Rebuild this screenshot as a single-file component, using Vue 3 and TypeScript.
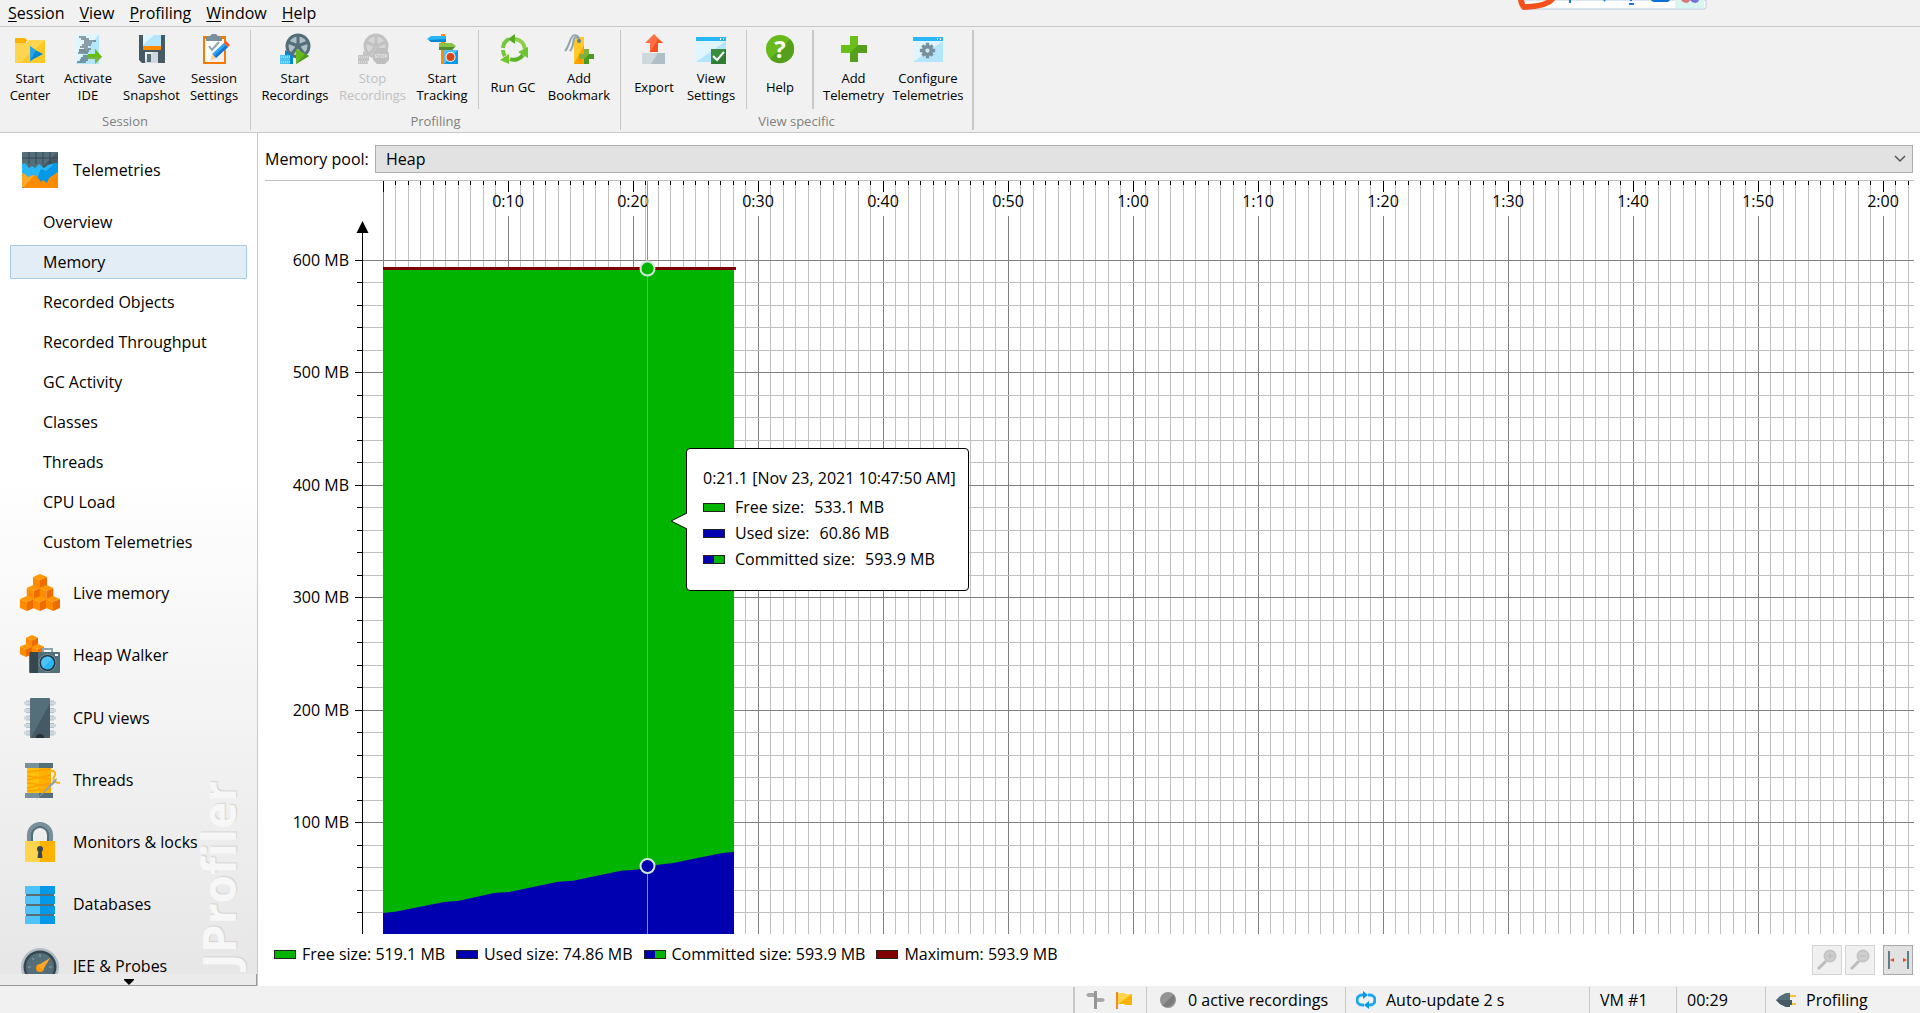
<script setup lang="ts">
import { computed, onBeforeUnmount, onMounted, ref } from 'vue'

interface Tool { icon: string; label: string; width: number; disabled?: boolean }
interface ToolGroup { title: string; blocks: Tool[][] }
interface Series { kind: string; label: string; value: string }

const menus = ['Session', 'View', 'Profiling', 'Window', 'Help']

const groups: ToolGroup[] = [
  {
    title: 'Session',
    blocks: [[
      { icon: 'folder', label: 'Start\nCenter', width: 54 },
      { icon: 'ide', label: 'Activate\nIDE', width: 62 },
      { icon: 'save', label: 'Save\nSnapshot', width: 65 },
      { icon: 'clipboard', label: 'Session\nSettings', width: 60 },
    ]],
  },
  {
    title: 'Profiling',
    blocks: [
      [
        { icon: 'record', label: 'Start\nRecordings', width: 76 },
        { icon: 'stop', label: 'Stop\nRecordings', width: 79, disabled: true },
        { icon: 'track', label: 'Start\nTracking', width: 60 },
      ],
      [
        { icon: 'gc', label: 'Run GC', width: 56 },
        { icon: 'bookmark', label: 'Add\nBookmark', width: 76 },
      ],
    ],
  },
  {
    title: 'View specific',
    blocks: [
      [
        { icon: 'export', label: 'Export', width: 58 },
        { icon: 'viewset', label: 'View\nSettings', width: 56 },
      ],
      [{ icon: 'help', label: 'Help', width: 56 }],
      [
        { icon: 'plus', label: 'Add\nTelemetry', width: 65 },
        { icon: 'config', label: 'Configure\nTelemetries', width: 84 },
      ],
    ],
  },
]

const views = ['Overview', 'Memory', 'Recorded Objects', 'Recorded Throughput', 'GC Activity', 'Classes', 'Threads', 'CPU Load', 'Custom Telemetries']
const activeView = ref('Memory')

const sections = [
  { icon: 'cubes', label: 'Live memory' },
  { icon: 'heap', label: 'Heap Walker' },
  { icon: 'cpu', label: 'CPU views' },
  { icon: 'spool', label: 'Threads' },
  { icon: 'lock', label: 'Monitors & locks' },
  { icon: 'db', label: 'Databases' },
  { icon: 'gauge', label: 'JEE & Probes' },
]

const hover: Series[] = [
  { kind: 'free', label: 'Free size:', value: '533.1 MB' },
  { kind: 'used', label: 'Used size:', value: '60.86 MB' },
  { kind: 'committed', label: 'Committed size:', value: '593.9 MB' },
]
const legend: Series[] = [
  { kind: 'free', label: 'Free size:', value: '519.1 MB' },
  { kind: 'used', label: 'Used size:', value: '74.86 MB' },
  { kind: 'committed', label: 'Committed size:', value: '593.9 MB' },
  { kind: 'maximum', label: 'Maximum:', value: '593.9 MB' },
]

/* chart geometry */
const originX = 118
const axisX = 97
const secondWidth = 12.5
const cursorTime = 21.1
const endTime = 28.1
const committed = 593.9
const used: [number, number][] = [
  [0, 19.6], [1, 20.6], [4.9, 29.4], [6.1, 30.5], [8.9, 37.4], [10.1, 38.3], [14, 47.3],
  [15.2, 48.3], [19.1, 57.2], [20.4, 58.3], [21.7, 62], [23.2, 64.1], [27.1, 72.8], [28.1, 74],
]

const plot = ref<HTMLElement | null>(null)
const size = ref({ w: 1649, h: 754 })
let observer: ResizeObserver | undefined

onMounted(() => {
  observer = new ResizeObserver(([entry]) => {
    size.value = { w: Math.round(entry.contentRect.width), h: Math.round(entry.contentRect.height) }
  })
  if (plot.value) observer.observe(plot.value)
})
onBeforeUnmount(() => observer?.disconnect())

const bottom = computed(() => size.value.h - 1)
const xAt = (s: number) => Math.floor(originX + s * secondWidth)
const exactY = (mb: number) => size.value.h - (mb * (size.value.h - 79.5)) / 600
const yAt = (mb: number) => Math.floor(exactY(mb))

const seconds = computed(() => {
  const count = Math.floor((size.value.w - originX) / secondWidth)
  return Array.from({ length: count + 1 }, (_, s) => ({
    x: xAt(s),
    major: s % 10 === 0,
    text: s > 0 && s % 10 === 0 ? `${Math.floor(s / 60)}:${String(s % 60).padStart(2, '0')}` : '',
  }))
})
const levels = computed(() =>
  Array.from({ length: 30 }, (_, i) => (i + 1) * 20).map((mb) => ({
    y: yAt(mb),
    major: mb % 100 === 0,
    text: mb % 100 === 0 ? `${mb} MB` : '',
  })),
)
const usedPath = computed(() => {
  const pts = used.map(([s, mb]) => `${xAt(s)},${exactY(mb).toFixed(1)}`).join(' L')
  return `M${originX},${bottom.value} L${pts} V${bottom.value} Z`
})
</script>

<template>
  <div class="app">
    <svg class="defs" aria-hidden="true">
      <symbol id="i-folder" viewBox="0 0 32 32">
        <path fill="#ffb300" d="M1 5h10l3 3h-2v3H1z" /><path fill="#ffd54f" d="M1 10h11l3-3h16v23H1z" />
        <path fill="#ffca28" d="M31 7v23H6z" /><path fill="#29b6f6" d="M16 13l7 8-7 8z" /><path fill="#0288d1" d="M16 28l13-7-8-4z" /><path fill="#29a8e8" d="M16 13l6 4-6 11z" />
      </symbol>
      <symbol id="i-ide" viewBox="0 0 32 32">
        <path fill="#e1f5fe" d="M4 1h23v30H4z" /><path fill="#b3e5fc" d="M27 1v30H4z" />
        <path stroke="#37474f" stroke-width="1.2" fill="none" d="M7 4h7M9 6h8M12 8h12M12 10h8M10 12h9M8 14h8M12 16h7M7 18h10M6 20h10M11 23h7M9 25h7M8 27h8M5 29h9" /><path fill="#78909c" d="M7 16h7v4H7z" />
        <path fill="#7cb342" d="M16 21h7v-5l7 8-7 7v-5h-7z" /><path fill="#64c010" d="M16 21h7v-5l7 8H16z" />
      </symbol>
      <symbol id="i-save" viewBox="0 0 32 32">
        <path fill="#455a64" d="M3 2h26v28H6l-3-3z" /><path fill="#b3e5fc" d="M7 2h18v11H7z" /><path fill="#e1f5fe" d="M7 2h11L7 12z" />
        <path fill="#fb8c00" d="M7 13h18v4H7z" /><path fill="#cfd8dc" d="M9 19h13v11H9z" /><path fill="#eceff1" d="M9 19h8l-8 9z" /><path fill="#546e7a" d="M11 21h4v8h-4z" />
      </symbol>
      <symbol id="i-clipboard" viewBox="0 0 32 32">
        <path fill="#f57c00" d="M5 3h23v28H5z" /><path fill="#fff" d="M7 6h19v23H7z" /><path fill="#f0f0f0" d="M26 9v20H9z" />
        <path fill="#78909c" d="M8 8V4l4-1 2-2h4l2 2 4 1v4z" /><path fill="none" stroke="#90a4ae" stroke-width="2" d="M11 13l3 4 7-8" />
        <path fill="#29a8f0" d="M26 10l4 4-12 11-4-4z" /><path fill="#1976d2" d="M28 12l2 2-12 11-2-2z" /><path fill="#ff5722" d="M26 10l2-2 4 4-2 2z" /><path fill="#ffcc80" d="M14 21l4 4-5 2z" />
      </symbol>
      <symbol id="i-reel" viewBox="0 0 32 32">
        <circle cx="19" cy="13" r="11" fill="none" stroke="currentColor" stroke-width="3" /><circle cx="19" cy="13" r="3" fill="currentColor" />
        <path stroke="currentColor" stroke-width="3" d="M19 13V2M19 13l10-4M19 13l7 9M19 13l-7 9M19 13L9 9" />
      </symbol>
      <symbol id="i-record" viewBox="0 0 32 32">
        <circle cx="19" cy="13" r="11" fill="#b0bec5" /><use href="#i-reel" color="#546e7a" />
        <path fill="#0277bd" d="M6 17l5 4-5 4z" /><path fill="#4fc3f7" d="M1 22h10v9H1z" /><path fill="#0288d1" d="M6 18l8 5v8h-3v-9H6z" />
        <path stroke="#e1f5fe" stroke-dasharray="1 1" d="M2 24h9M2 29h9" /><path fill="#66bb1a" d="M17 16l13 7-13 8z" /><path fill="#4c9a1f" d="M17 31l13-8-4-2z" />
      </symbol>
      <symbol id="i-stop" viewBox="0 0 32 32">
        <circle cx="19" cy="13" r="11" fill="#d6d6d6" /><use href="#i-reel" color="#c2c2c2" />
        <path fill="#c4c4c4" d="M1 22h10v9H1zM6 18l6 4v6H6z" /><path stroke="#eee" stroke-dasharray="1 1" d="M2 24h9M2 29h9" />
        <path fill="#bfbfbf" d="M20 15h8l4 5v7l-4 4h-8l-4-4v-7z" />
      </symbol>
      <symbol id="i-track" viewBox="0 0 32 32">
        <path fill="#fb8c00" d="M15 1h4v30h-4z" /><path fill="#29b6f6" d="M1 6l4-3h15v6H5z" /><path fill="#0288d1" d="M3 7l17-1v3H5z" />
        <path fill="#8bc34a" d="M13 10h13l4 3-4 4H13z" /><path fill="#558b2f" d="M13 14h16l-3 3H13z" />
        <path fill="#4fc3f7" d="M18 17h14v14H18z" /><path fill="#039be5" d="M32 17v14H18z" /><circle cx="24.500" cy="24" r="5" fill="#fff" /><circle cx="24.500" cy="24" r="4" fill="#d84315" />
      </symbol>
      <symbol id="i-gc" viewBox="0 0 32 32">
        <g fill="none" stroke-width="4"><path d="M6 15a11 11 0 0 1 6-9" stroke="#76c63a" /><path d="M18 6a11 11 0 0 1 10 10" stroke="#8bd048" /><path d="M26 22a11 11 0 0 1-13 4" stroke="#5db526" /><path d="M8 23a11 11 0 0 1-2-6" stroke="#76c63a" /></g>
        <path fill="#55aa20" d="M11 6l7-5v10z" /><path fill="#6fc52c" d="M21 19l10-5v11zM3 27l9-6v10z" />
      </symbol>
      <symbol id="i-bookmark" viewBox="0 0 32 32">
        <path fill="#ffca28" d="M11 7l4-3h6v27H11z" /><path fill="#ffa000" d="M21 12v19H11z" />
        <path fill="none" stroke="#90a4ae" stroke-width="2" d="M16 7c0-5-5-6-7-3C6 8 6 14 2 18M16 7c0-3-4-4-5-1-1 4-1 9-4 12" /><circle cx="16" cy="8" r="2" fill="#607d8b" />
        <path fill="#7cb342" d="M21 16h5v5h5v5h-5v5h-5v-5h-5v-5h5z" /><path fill="#4c9a1f" d="M26 21h5v5h-5v5h-5v-5z" />
      </symbol>
      <symbol id="i-export" viewBox="0 0 32 32">
        <path fill="#ff7043" d="M16 1l9 9h-5v9h-8v-9H7z" /><path fill="#f4511e" d="M25 10h-5v9h-8l8-13z" /><path fill="#cfd8dc" d="M4 20h23v11H4z" /><path fill="#b0bec5" d="M27 20v11H13l7-11z" />
      </symbol>
      <symbol id="i-window" viewBox="0 0 32 32">
        <path fill="#e1f5fe" d="M1 4h30v25H1z" /><path fill="#b3e5fc" d="M31 8v21H1z" /><path fill="#29b6f6" d="M1 4h30v4H1z" /><path fill="#fff" d="M25 5h1v2h-1zM28 5h1v2h-1z" />
      </symbol>
      <symbol id="i-viewset" viewBox="0 0 32 32">
        <use href="#i-window" /><path fill="#388e3c" d="M16 16h15v15H16z" /><path fill="#2e7d32" d="M31 16v15H16z" /><path fill="none" stroke="#fff" stroke-width="2" d="M18 23l4 4 7-8" />
      </symbol>
      <symbol id="i-help" viewBox="0 0 32 32">
        <circle cx="16" cy="16" r="14" fill="#66bb1a" /><path fill="#559f1c" d="M26 6A14 14 0 0 1 6 26z" />
      </symbol>
      <symbol id="i-plus" viewBox="0 0 32 32">
        <path fill="#6abf1b" d="M12 3h8v9h9v8h-9v9h-8v-9H3v-8h9z" /><path fill="#559f1c" d="M20 12h9v8h-9v9h-8v-9z" />
      </symbol>
      <symbol id="i-gear" viewBox="0 0 20 20">
        <g stroke="currentColor" stroke-width="4"><path d="M10 1v18M1 10h18M4 4l12 12M16 4L4 16" /></g><circle cx="10" cy="10" r="6.500" fill="currentColor" /><circle cx="10" cy="10" r="2.500" fill="#cfe8f5" />
      </symbol>
      <symbol id="i-config" viewBox="0 0 32 32">
        <use href="#i-window" /><use href="#i-gear" x="7" y="9" width="17" height="17" color="#78909c" />
      </symbol>
      <symbol id="i-telemetry" viewBox="0 0 40 40">
        <rect x="2" y="2" width="36" height="36" rx="1" fill="#546e7a" /><path fill="#455a64" d="M38 2v20L18 20z" />
        <path stroke="#37474f" d="M9 2v12M16 2v12M23 2v12M30 2v12M2 8h36" />
        <path fill="#29b6f6" d="M2 14l3-1 4 5 3-2 3 2 4-4 5 4 4-3 4-1 3-1 3 2v13l-4 1-4 7-4-3-3 3-4-4-2-3-5 1-3-3-3 1-4-3z" /><path fill="#0398e8" d="M21 19l5 2 5-4 3-4h4v14l-4 2-5 8-6 1-7-7z" />
        <path fill="#ffa726" d="M2 23l3 1 3 3 5-2 3 1 5 8 3-2 4 2 3-7 7-5v15H2z" /><path fill="#fb8c00" d="M14 26l2-1 5 7 2-2 4 3 2-5 9-6v15a1 1 0 0 1-1 1H3z" />
      </symbol>
      <symbol id="i-cube" viewBox="0 0 14 15">
        <path fill="#ff9800" d="M0 3l7-3 7 3-7 3z" /><path fill="#ff8c00" d="M0 3l7 3v9l-7-3z" /><path fill="#ef6c00" d="M14 3L7 6v9l7-3z" />
      </symbol>
      <symbol id="i-cubes" viewBox="0 0 40 40">
        <use href="#i-cube" x="13" y="1" width="14" height="15" /><use href="#i-cube" x="6.500" y="12" width="14" height="15" /><use href="#i-cube" x="19.500" y="12" width="14" height="15" />
        <use href="#i-cube" x="0" y="23" width="14" height="15" /><use href="#i-cube" x="13" y="23" width="14" height="15" /><use href="#i-cube" x="26" y="23" width="14" height="15" />
      </symbol>
      <symbol id="i-heap" viewBox="0 0 40 40">
        <use href="#i-cube" x="6" y="0" width="12" height="13" /><use href="#i-cube" x="0" y="9" width="12" height="13" /><use href="#i-cube" x="12" y="9" width="12" height="13" />
        <path fill="none" stroke="#90a4ae" stroke-width="2" d="M23 17v-3h9v3" /><rect x="9" y="17" width="31" height="21" rx="1" fill="#546e7a" /><path fill="#37474f" d="M10 17h8v21h-8z" />
        <circle cx="27.500" cy="28" r="9" fill="#78909c" /><circle cx="27.500" cy="28" r="8" fill="#263238" /><circle cx="27.500" cy="28" r="6.500" fill="#29b6f6" /><path fill="#4fc3f7" d="M21 28a6.500 6.500 0 0 1 11-4.500L23 33z" /><path fill="#fff" d="M35 19h3v2h-3z" />
      </symbol>
      <symbol id="i-cpu" viewBox="0 0 40 40">
        <path stroke="#b0bec5" stroke-width="5" d="M6 5h28M6 12.500h28M6 20h28M6 27.500h28M6 35h28" /><path stroke="#cfd8dc" stroke-width="3" d="M4 5h32M4 12.500h32M4 20h32M4 27.500h32M4 35h32" />
        <rect x="10" y="0" width="20" height="40" rx="1" fill="#546e7a" /><path fill="#455a64" d="M30 5v34a1 1 0 0 1-1 1H11z" /><path fill="#263238" d="M16 40a4 4 0 0 1 8 0z" />
      </symbol>
      <symbol id="i-spool" viewBox="0 0 40 40">
        <path fill="#ffc107" d="M7 8h24v25H7z" /><path stroke="#ffa000" stroke-width="1.500" d="M7 12l24-3M7 16l24 3M7 20l24-5M7 23l24 3M7 28l24-5M7 31l24-2" /><path fill="#ffa000" opacity=".5" d="M19 8h12v25H19z" />
        <path fill="#78909c" d="M5 3h28v5H5zM5 33h28v5H5z" /><path fill="#546e7a" d="M19 3h14v5H19zM19 33h14v5H19z" />
        <path fill="none" stroke="#ffb300" stroke-width="2" d="M30 11c6-1 6 3 4 6-2 4 2 6 6 6" /><path fill="#90a4ae" d="M16 40L34 20l3-2-1 4z" />
      </symbol>
      <symbol id="i-lock" viewBox="0 0 40 40">
        <path fill="none" stroke="#78909c" stroke-width="5" d="M9.500 21V13a10.500 10.500 0 0 1 21 0v8" /><path fill="none" stroke="#546e7a" stroke-width="2" d="M12 21V13a8 8 0 0 1 16 0v8" />
        <path fill="#ffd54f" d="M5 19h15v21H5z" /><path fill="#ffb300" d="M20 19h15v21H20z" /><circle cx="20" cy="27" r="3" fill="#37474f" /><path fill="#37474f" d="M18.500 28h3l1 8h-5z" />
      </symbol>
      <symbol id="i-db" viewBox="0 0 40 40">
        <path fill="#546e7a" d="M6 5h28v33H6z" /><path fill="#4fc3f7" d="M5 2h15v8H5zM5 12h15v8H5zM5 22h15v8H5zM5 32h15v8H5z" /><path fill="#0398e8" d="M20 2h15v8H20zM20 12h15v8H20zM20 22h15v8H20zM20 32h15v8H20z" />
      </symbol>
      <symbol id="i-gauge" viewBox="0 0 40 40">
        <circle cx="20" cy="21" r="19" fill="#b0bec5" /><circle cx="20" cy="21" r="16.500" fill="#37474f" /><circle cx="20" cy="21" r="14" fill="#546e7a" /><path stroke="#90a4ae" d="M20 8v3M8 21h3M29 21h3M12 12l2 2" />
        <circle cx="20" cy="22" r="4" fill="#ff9800" /><path fill="#ffa726" d="M17 20L30 12 23 24z" />
      </symbol>
      <symbol id="i-magnifier" viewBox="0 0 24 24">
        <path stroke="#bdbdbd" stroke-width="3" d="M3 21l8-8" /><circle cx="15" cy="8" r="6.500" fill="#c4c4c4" /><circle cx="15" cy="8" r="4.500" fill="#cfcfcf" />
      </symbol>
    </svg>

    <nav class="menubar" aria-label="Main menu">
      <button v-for="m in menus" :key="m" type="button"><u>{{ m[0] }}</u>{{ m.slice(1) }}</button>
    </nav>

    <svg class="ime" width="190" height="11" viewBox="0 0 190 11" aria-hidden="true">
      <path d="M4 0h184v7q0 2-2 2H4z" fill="#fff" stroke="#b4cbe4" /><path d="M157 0h29v8h-29z" fill="#d8f5f0" />
      <path d="M0 0h6l1 4q14 0 22-4h8q-6 9-32 10-4-3-5-10z" fill="#f4511e" />
      <path d="M52 0v3M87 0l-1 1M111 4h5M113 0v1" stroke="#1976d2" stroke-width="2" /><path d="M133 0h19q-1 2-3 2h-13q-2 0-3-2z" fill="#0b6fd6" />
      <path d="M163 0h9q-1 3-4 3t-5-3z" fill="#d9777b" /><path d="M172 0h9q-1 3-4 3t-5-3z" fill="#7b6fdc" />
    </svg>

    <div class="toolbar" role="toolbar" aria-label="Tools">
      <section v-for="g in groups" :key="g.title" class="group">
        <div class="blocks">
          <div v-for="(block, i) in g.blocks" :key="i" class="block">
            <button v-for="t in block" :key="t.label" type="button" class="tool" :disabled="t.disabled" :style="{ width: t.width + 'px' }">
              <svg width="32" height="32">
                <use :href="'#i-' + t.icon" />
                <text v-if="t.icon === 'help'" class="mark" x="16" y="25" text-anchor="middle">?</text>
                <text v-if="t.icon === 'stop'" class="sign" x="24" y="25" text-anchor="middle">STOP</text>
              </svg>
              <span>{{ t.label }}</span>
            </button>
          </div>
        </div>
        <h2>{{ g.title }}</h2>
      </section>
    </div>

    <div class="body">
      <aside class="sidebar">
        <div class="watermark" aria-hidden="true">JProfiler</div>
        <nav class="sections" aria-label="Views">
          <button type="button" class="section"><svg width="40" height="40"><use href="#i-telemetry" /></svg>Telemetries</button>
          <ul>
            <li v-for="v in views" :key="v">
              <button type="button" class="view" :class="{ active: v === activeView }" @click="activeView = v">{{ v }}</button>
            </li>
          </ul>
          <button v-for="s in sections" :key="s.label" type="button" class="section">
            <svg width="40" height="40"><use :href="'#i-' + s.icon" /></svg>{{ s.label }}
          </button>
        </nav>
        <button type="button" class="more" aria-label="Scroll down">
          <svg width="10" height="6"><path d="M0 0h10v1L5 6 0 1z" /></svg>
        </button>
      </aside>

      <main class="content">
        <div class="pool">
          <label for="pool">Memory pool:</label>
          <div class="combo">
            <select id="pool"><option>Heap</option></select>
            <svg width="12" height="8" aria-hidden="true"><path d="M1 1l5 5 5-5" fill="none" stroke="#555" stroke-width="1.500" /></svg>
          </div>
        </div>

        <div ref="plot" class="plot">
          <svg :width="size.w" :height="size.h" shape-rendering="crispEdges" role="img" aria-label="Heap memory over time">
            <template v-for="t in seconds" :key="'t' + t.x">
              <rect :x="t.x" :y="t.major ? 35 : 4" width="1" :height="bottom - (t.major ? 35 : 4)" :fill="t.major ? '#808080' : '#c0c0c0'" />
              <rect :x="t.x" y="0" width="1" :height="t.major ? 11 : 4" fill="#000" />
            </template>
            <template v-for="l in levels" :key="'l' + l.y">
              <rect :x="axisX" :y="l.y" :width="size.w - axisX" height="1" :fill="l.major ? '#808080' : '#c0c0c0'" />
              <rect :x="l.major ? axisX - 7 : axisX - 5" :y="l.y" :width="l.major ? 7 : 5" height="1" fill="#000" />
            </template>
            <rect :x="originX" y="11" width="1" height="60" fill="#808080" />
            <rect :x="axisX" y="50" width="1" :height="bottom - 50" fill="#000" />
            <path :d="`M${axisX + 0.5} 40l6 12h-12z`" shape-rendering="auto" />
            <rect :x="originX" :y="yAt(committed) + 1" :width="xAt(endTime) - originX" :height="bottom - yAt(committed) - 1" fill="#00b400" />
            <path :d="usedPath" fill="#0000b0" shape-rendering="auto" />
            <rect :x="originX" :y="yAt(committed)" :width="xAt(endTime) - originX + 2" height="3" fill="#800000" />
            <g class="ticks">
              <text v-for="t in seconds.filter((s) => s.text)" :key="t.text" :x="t.x" y="26" text-anchor="middle">{{ t.text }}</text>
              <text v-for="l in levels.filter((s) => s.text)" :key="l.text" x="84" :y="l.y + 6" text-anchor="end">{{ l.text }}</text>
            </g>
            <rect :x="xAt(cursorTime) + 1" y="0" width="1" :height="bottom" fill="#5fb85f" />
            <g stroke="#d0e8d8" stroke-width="2" shape-rendering="auto">
              <circle :cx="xAt(cursorTime) + 1.5" :cy="yAt(committed) + 1.5" r="7" fill="#00b400" />
              <circle :cx="xAt(cursorTime) + 1.5" :cy="yAt(60.86)" r="7" fill="#0000b0" />
            </g>
          </svg>

          <div class="tip" role="tooltip">
            <svg class="beak" width="17" height="16"><path d="M17 0L1 8l16 8" fill="#fff" stroke="#000" /></svg>
            <h3>0:21.1 [Nov 23, 2021 10:47:50 AM]</h3>
            <p v-for="s in hover" :key="s.kind"><i class="swatch" :class="s.kind" /><span>{{ s.label }}</span><b>{{ s.value }}</b></p>
          </div>
        </div>

        <footer class="foot">
          <ul class="legend">
            <li v-for="s in legend" :key="s.kind"><i class="swatch" :class="s.kind" />{{ s.label }} {{ s.value }}</li>
          </ul>
          <div class="zoom">
            <button type="button" disabled aria-label="Zoom in"><svg width="24" height="24"><use href="#i-magnifier" /><path d="M12 8h6M15 5v6" stroke="#b8b8b8" /></svg></button>
            <button type="button" disabled aria-label="Zoom out"><svg width="24" height="24"><use href="#i-magnifier" /><path d="M12 8h6" stroke="#b8b8b8" /></svg></button>
            <button type="button" class="fit" aria-label="Scale to fit window">
              <svg width="24" height="24"><path d="M3 3v18M22 3v18" stroke="#607d8b" stroke-width="2" /><path d="M4 12l4-2v4zM21 12l-4-2v4z" fill="#e64a19" /></svg>
            </button>
          </div>
        </footer>
      </main>
    </div>

    <div class="status">
      <div class="cell marks">
        <svg width="19" height="18"><path d="M0 4l2-2h8v4H2zM11 7h6l2 2-2 2h-6z" fill="#a8a8a8" /><path d="M8 0h3v18H8z" fill="#969696" /></svg>
        <svg width="18" height="20"><path d="M1 2h2v17H1z" fill="#f08c1e" /><path d="M3 3h6l2 1h6v11h-6l-2-1H3z" fill="#ffd54f" /><path d="M3 14L17 4v11h-6l-2-1z" fill="#ffb300" /></svg>
      </div>
      <div class="cell rec"><svg width="16" height="16"><circle cx="8" cy="8" r="8" fill="#949494" /><path d="M13.500 2.500a8 8 0 0 1-11 11z" fill="#7c7c7c" /></svg>0 active recordings</div>
      <div class="cell upd">
        <svg width="20" height="18"><g fill="none" stroke="#1ea7f0" stroke-width="3"><path d="M8 14H6a4.500 4.500 0 0 1 0-10h3" /><path d="M12 4h2a4.500 4.500 0 0 1 0 10h-3" /></g><path d="M7 0l5 4-5 4zM13 10v8l-5-4z" fill="#0398e8" /></svg>Auto-update 2 s
      </div>
      <div class="cell vm">VM #1</div>
      <div class="cell time">00:29</div>
      <div class="cell mode">
        <svg width="20" height="16"><path d="M14 4h6M14 12h6" stroke="#fbc02d" stroke-width="2" /><path d="M0 8l4-4 6-3h4v14h-4l-6-3z" fill="#546e7a" /><path d="M0 8h16v5h-2v2h-4l-6-3z" fill="#455a64" /></svg>Profiling
      </div>
    </div>
  </div>
</template>

<style>
body { background: #f1f1f1; }
</style>

<style scoped>
.app { position: relative; display: flex; flex-direction: column; height: 100vh; min-height: 600px; overflow: hidden; background: #f1f1f1; color: #000; font: 16px/24px "Open Sans", "Noto Sans", sans-serif; }
.app *, .app *::before, .app *::after { box-sizing: border-box; }
button { padding: 0; border: 0; background: none; color: inherit; font: inherit; }
ul, p, h2, h3 { margin: 0; padding: 0; list-style: none; font: inherit; }
svg { display: block; flex: none; }
.defs { position: absolute; width: 0; height: 0; }

.menubar { display: flex; gap: 15px; flex: none; height: 27px; padding: 0 8px; border-bottom: 1px solid #c8c8c8; }
.menubar u { text-underline-offset: 2px; }
.ime { position: absolute; top: 0; right: 212px; }

.toolbar { display: flex; flex: none; height: 106px; border-bottom: 1px solid #c8c8c8; padding: 3px 0 2px; }
.group { display: flex; flex-direction: column; border-right: 1px solid #c8c8c8; }
.group:last-child { border-right-width: 2px; }
.blocks { display: flex; height: 79px; }
.block { display: flex; padding: 3px 3px 0 6px; }
.block + .block { border-left: 1px solid #c8c8c8; }
.group:first-child .block { padding: 3px 6px 0 3px; }
.group:nth-child(2) .block:first-child { padding: 3px 6px 0; }
.group:last-child .block:nth-child(1) { padding: 3px 7px 0 4px; }
.group:last-child .block:nth-child(2) { padding: 3px 4px 0 5px; }
.group:last-child .block:nth-child(3) { padding: 3px 2px 0 7px; border-left-width: 2px; }
.tool { display: flex; flex-direction: column; align-items: center; font-size: 13px; line-height: 17px; white-space: pre; }
.tool span { display: flex; align-items: center; height: 44px; text-align: center; }
.tool:disabled { color: #c0c0c0; }
.mark { fill: #fff; font-size: 24px; font-weight: 700; }
.sign { fill: #e4e4e4; font-size: 5px; font-weight: 700; }
.group h2 { padding-top: 2px; color: #808080; font-size: 13px; line-height: 20px; text-align: center; }

.body { display: flex; flex: 1; min-height: 0; background: #fff; }
.sidebar { position: relative; display: flex; flex-direction: column; flex: none; width: 258px; border-right: 1px solid #c8c8c8; background: linear-gradient(#fff 40%, #e6e6e6); }
.sections { position: relative; display: flex; flex-direction: column; flex: 1; min-height: 0; overflow: hidden; padding-top: 6px; }
.section { display: flex; align-items: center; gap: 13px; flex: none; height: 62px; padding-left: 20px; text-align: left; }
.section:nth-of-type(4) { margin-top: 1px; }
.sections ul { flex: none; padding-top: 1px; }
.view { display: block; width: 237px; height: 34px; margin: 0 10px 6px; padding: 0 0 0 32px; border: 1px solid transparent; border-radius: 1px; text-align: left; }
.sections li { padding-top: 3px; height: 40px; }
.view.active { border-color: #a6cbe6; background: #e2edf6; }
.more { position: relative; display: flex; justify-content: center; flex: none; height: 12px; padding: 5px 0 0 2px; border-right: 1px solid #999; border-bottom: 1px solid #999; background: #ebebeb; }
.watermark { position: absolute; right: 8px; bottom: 18px; writing-mode: vertical-rl; transform: rotate(180deg); color: #f7f7f7; font-size: 46px; font-weight: 700; line-height: 62px; text-shadow: 1px 1px 1px #d2d2d2; }

.content { display: flex; flex-direction: column; flex: 1; min-width: 0; padding: 12px 6px 0 7px; }
.pool { display: flex; align-items: center; gap: 6px; flex: none; height: 36px; padding: 0 1px 8px 0; border-bottom: 1px solid #c0c0c0; }
.pool label { flex: none; width: 104px; white-space: nowrap; }
.combo { position: relative; flex: 1; height: 28px; }
.combo select { width: 100%; height: 28px; padding: 0 10px; border: 1px solid #adadad; border-radius: 0; background: #e2e2e2; color: #000; font: inherit; line-height: 22px; appearance: none; }
.combo svg { position: absolute; right: 7px; top: 10px; pointer-events: none; }
.plot { position: relative; flex: 1; min-height: 0; overflow: hidden; }
.plot > svg { position: absolute; inset: 0; }
.ticks { font-size: 16px; }
.tip { position: absolute; left: 421px; top: 267px; width: 283px; height: 143px; padding: 17px 16px; border: 1px solid #000; border-radius: 4px; background: #fff; white-space: nowrap; }
.tip h3 { line-height: 24px; margin-bottom: 4px; }
.tip p { display: flex; align-items: center; gap: 10px; height: 26px; }
.tip b { font-weight: 400; }
.beak { position: absolute; left: -17px; top: 64px; }
.swatch { flex: none; width: 22px; height: 9px; border: 1px solid #222; }
.free { background: #00b400; }
.used { background: #0000b0; }
.committed { background: linear-gradient(90deg, #0000b0 50%, #00b400 50%); }
.maximum { background: #800000; }
.foot { display: flex; justify-content: space-between; flex: none; height: 51px; padding: 7px 1px 0 9px; }
.legend { display: flex; gap: 11px; }
.legend li { display: flex; align-items: center; gap: 6px; height: 24px; white-space: nowrap; }
.zoom { display: flex; gap: 3px; padding-top: 3px; }
.zoom button { display: grid; place-items: center; width: 30px; height: 30px; border: 1px solid #d4d4d4; background: #f0f0f0; }
.zoom .fit { margin-left: 5px; border-color: #a8a8a8; background: #e2e2e2; }

.status { display: flex; justify-content: flex-end; flex: none; height: 27px; padding-top: 1px; }
.cell { display: flex; align-items: center; gap: 10px; border-left: 1px solid #c8c8c8; padding-left: 10px; white-space: nowrap; }
.marks { width: 73px; border-left-width: 2px; padding-left: 11px; }
.rec { width: 199px; gap: 12px; padding-left: 13px; }
.upd { width: 244px; }
.vm { width: 87px; }
.time { width: 89px; }
.mode { width: 155px; }
</style>
